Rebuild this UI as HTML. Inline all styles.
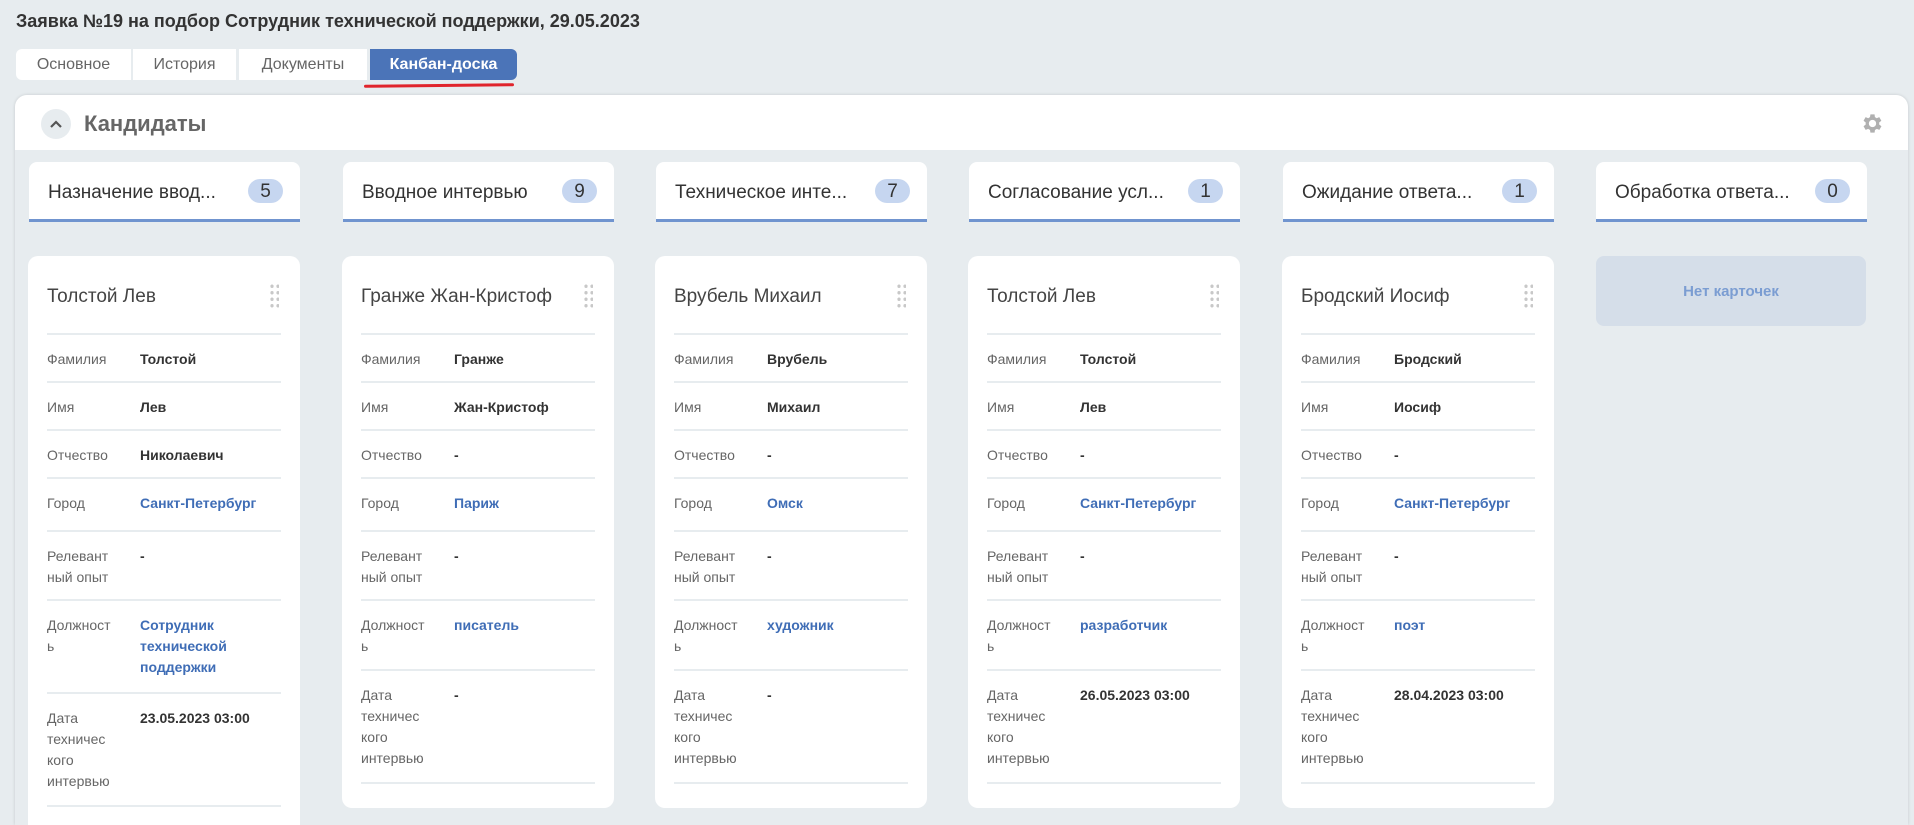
<!DOCTYPE html>
<html style="width:1914px;height:825px;overflow:hidden"><head><meta charset="utf-8">
<style>
*{box-sizing:border-box;margin:0;padding:0}
body{width:1914px;height:825px;overflow:hidden;background:#e7ecef;font-family:"Liberation Sans","DejaVu Sans",sans-serif;position:relative;color:#333}
.title{position:absolute;left:16px;top:11px;font-size:18px;font-weight:bold;color:#333}
.tab{position:absolute;top:49px;height:31px;background:#fff;color:#666;font-size:16px;line-height:32px;text-align:center}
.tab.act{background:#4b74b8;color:#fff;font-weight:bold;border-radius:0 6px 6px 0}
.red{position:absolute;left:364px;top:84px;width:150px;height:3px;background:#e0242c;border-radius:2px;transform:rotate(-0.6deg)}
.panel{position:absolute;left:15px;top:95px;width:1893px;height:730px;background:#e7ecef;border-radius:12px 12px 0 0;box-shadow:0 0 3px rgba(0,0,0,.15);overflow:hidden}
.phead{position:absolute;left:0;top:0;width:100%;height:55px;background:#fff}
.chev{position:absolute;left:26px;top:14px;width:30px;height:30px;border-radius:50%;background:#e7ecef}
.ptitle{position:absolute;left:69px;top:16px;font-size:22px;font-weight:bold;color:#666}
.col{position:absolute;width:271px}
.ch{position:absolute;left:0;top:162px;width:271px;height:60px;background:#fff;border-radius:8px 8px 0 0;border-bottom:3px solid #7094cf}
.ch span.t{position:absolute;left:19px;top:20px;font-size:19px;color:#333;white-space:nowrap}
.badge{position:absolute;right:17px;top:17px;width:35px;height:24px;border-radius:12px;background:#c6d6f0;font-size:19px;text-align:center;line-height:25px;color:#333}
.card{position:absolute;left:-1px;top:256px;width:272px;background:#fff;border-radius:10px;padding:0 19px 24px 19px}
.nm{height:79px;border-bottom:2px solid #e7ecef;font-size:19px;color:#444;padding-top:30px;position:relative}
.dots{position:absolute;right:2px;top:27px;width:10px;height:26px;background-image:radial-gradient(circle,#c8c8c8 1.6px,transparent 1.8px);background-size:6px 6.5px}
.row{border-bottom:2px solid #e7ecef;display:flex;font-size:14px;line-height:21px;padding-top:14px}
.row .l{width:93px;color:#666;white-space:nowrap}
.row .v{font-weight:bold;color:#333}
.row .v.a{color:#3f6db6}
.empty{position:absolute;left:0;top:256px;width:270px;height:70px;background:#d5dee9;border-radius:8px;text-align:center;line-height:72px;color:#7b9dd2;font-weight:bold;font-size:15px}
</style></head><body>
<div class="title">Заявка №19 на подбор Сотрудник технической поддержки, 29.05.2023</div>
<div class="tab" style="left:16px;width:115px;border-radius:6px 0 0 6px">Основное</div>
<div class="tab" style="left:133px;width:103px">История</div>
<div class="tab" style="left:239px;width:128px">Документы</div>
<div class="tab act" style="left:370px;width:147px">Канбан-доска</div>
<div class="red"></div>
<div class="panel">
<div class="phead">
<div class="chev"><svg width="30" height="30" viewBox="0 0 30 30"><path d="M10 18 L15 13 L20 18" fill="none" stroke="#555" stroke-width="2.2"/></svg></div>
<div class="ptitle">Кандидаты</div>
<svg style="position:absolute;left:1845px;top:16px" width="25" height="25" viewBox="0 0 24 24"><path fill="#b0b0b0" d="M19.4 13a7.5 7.5 0 0 0 0-2l2.1-1.6-2-3.5-2.5 1a7.6 7.6 0 0 0-1.7-1L15 3.2h-4l-.4 2.7a7.6 7.6 0 0 0-1.7 1l-2.5-1-2 3.5L6.5 11a7.5 7.5 0 0 0 0 2l-2.1 1.6 2 3.5 2.5-1a7.6 7.6 0 0 0 1.7 1l.4 2.7h4l.4-2.7a7.6 7.6 0 0 0 1.7-1l2.5 1 2-3.5zM13 15.5a3.5 3.5 0 1 1 0-7 3.5 3.5 0 0 1 0 7z" transform="translate(-1 0)"/></svg>
</div>

<div class="col" style="left:14px;top:-95px">
<div class="ch"><span class="t">Назначение ввод...</span><span class="badge">5</span></div>
<div class="card" style="padding-bottom:0;border-radius:10px 10px 0 0"><div class="nm">Толстой Лев<div class="dots"></div></div>
<div class="row" style="height:48px"><div class="l">Фамилия</div><div class="v">Толстой</div></div>
<div class="row" style="height:48px"><div class="l">Имя</div><div class="v">Лев</div></div>
<div class="row" style="height:48px"><div class="l">Отчество</div><div class="v">Николаевич</div></div>
<div class="row" style="height:53px"><div class="l">Город</div><div class="v a">Санкт-Петербург</div></div>
<div class="row" style="height:69px"><div class="l">Релевант<br>ный опыт</div><div class="v">-</div></div>
<div class="row" style="height:93px"><div class="l">Должност<br>ь</div><div class="v a">Сотрудник<br>технической<br>поддержки</div></div>
<div class="row" style="height:113px"><div class="l">Дата<br>техничес<br>кого<br>интервью</div><div class="v">23.05.2023 03:00</div></div>
<div style="height:40px"></div>
</div></div>

<div class="col" style="left:328px;top:-95px">
<div class="ch"><span class="t">Вводное интервью</span><span class="badge">9</span></div>
<div class="card"><div class="nm">Гранже Жан-Кристоф<div class="dots"></div></div>
<div class="row" style="height:48px"><div class="l">Фамилия</div><div class="v">Гранже</div></div>
<div class="row" style="height:48px"><div class="l">Имя</div><div class="v">Жан-Кристоф</div></div>
<div class="row" style="height:48px"><div class="l">Отчество</div><div class="v">-</div></div>
<div class="row" style="height:53px"><div class="l">Город</div><div class="v a">Париж</div></div>
<div class="row" style="height:69px"><div class="l">Релевант<br>ный опыт</div><div class="v">-</div></div>
<div class="row" style="height:70px"><div class="l">Должност<br>ь</div><div class="v a">писатель</div></div>
<div class="row" style="height:113px"><div class="l">Дата<br>техничес<br>кого<br>интервью</div><div class="v">-</div></div>
</div></div>

<div class="col" style="left:641px;top:-95px">
<div class="ch"><span class="t">Техническое инте...</span><span class="badge">7</span></div>
<div class="card"><div class="nm">Врубель Михаил<div class="dots"></div></div>
<div class="row" style="height:48px"><div class="l">Фамилия</div><div class="v">Врубель</div></div>
<div class="row" style="height:48px"><div class="l">Имя</div><div class="v">Михаил</div></div>
<div class="row" style="height:48px"><div class="l">Отчество</div><div class="v">-</div></div>
<div class="row" style="height:53px"><div class="l">Город</div><div class="v a">Омск</div></div>
<div class="row" style="height:69px"><div class="l">Релевант<br>ный опыт</div><div class="v">-</div></div>
<div class="row" style="height:70px"><div class="l">Должност<br>ь</div><div class="v a">художник</div></div>
<div class="row" style="height:113px"><div class="l">Дата<br>техничес<br>кого<br>интервью</div><div class="v">-</div></div>
</div></div>

<div class="col" style="left:954px;top:-95px">
<div class="ch"><span class="t">Согласование усл...</span><span class="badge">1</span></div>
<div class="card"><div class="nm">Толстой Лев<div class="dots"></div></div>
<div class="row" style="height:48px"><div class="l">Фамилия</div><div class="v">Толстой</div></div>
<div class="row" style="height:48px"><div class="l">Имя</div><div class="v">Лев</div></div>
<div class="row" style="height:48px"><div class="l">Отчество</div><div class="v">-</div></div>
<div class="row" style="height:53px"><div class="l">Город</div><div class="v a">Санкт-Петербург</div></div>
<div class="row" style="height:69px"><div class="l">Релевант<br>ный опыт</div><div class="v">-</div></div>
<div class="row" style="height:70px"><div class="l">Должност<br>ь</div><div class="v a">разработчик</div></div>
<div class="row" style="height:113px"><div class="l">Дата<br>техничес<br>кого<br>интервью</div><div class="v">26.05.2023 03:00</div></div>
</div></div>

<div class="col" style="left:1268px;top:-95px">
<div class="ch"><span class="t">Ожидание ответа...</span><span class="badge">1</span></div>
<div class="card"><div class="nm">Бродский Иосиф<div class="dots"></div></div>
<div class="row" style="height:48px"><div class="l">Фамилия</div><div class="v">Бродский</div></div>
<div class="row" style="height:48px"><div class="l">Имя</div><div class="v">Иосиф</div></div>
<div class="row" style="height:48px"><div class="l">Отчество</div><div class="v">-</div></div>
<div class="row" style="height:53px"><div class="l">Город</div><div class="v a">Санкт-Петербург</div></div>
<div class="row" style="height:69px"><div class="l">Релевант<br>ный опыт</div><div class="v">-</div></div>
<div class="row" style="height:70px"><div class="l">Должност<br>ь</div><div class="v a">поэт</div></div>
<div class="row" style="height:113px"><div class="l">Дата<br>техничес<br>кого<br>интервью</div><div class="v">28.04.2023 03:00</div></div>
</div></div>

<div class="col" style="left:1581px;top:-95px">
<div class="ch"><span class="t">Обработка ответа...</span><span class="badge">0</span></div>
<div class="empty">Нет карточек</div>
</div>
</div>
</body></html>
